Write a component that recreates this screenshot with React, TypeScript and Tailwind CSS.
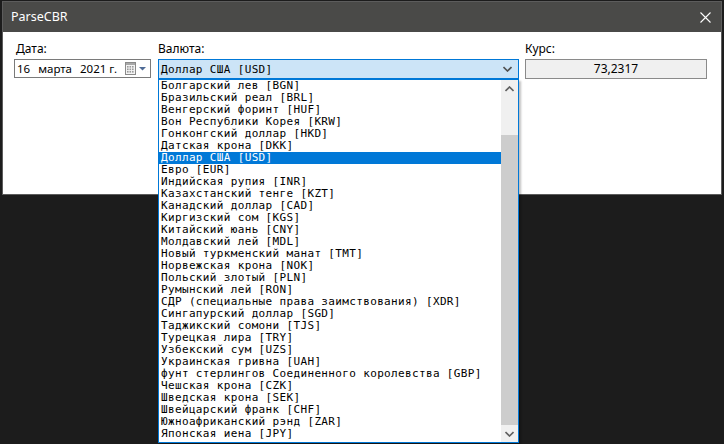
import React from 'react';

const CURRENCIES = [
  'Болгарский лев [BGN]',
  'Бразильский реал [BRL]',
  'Венгерский форинт [HUF]',
  'Вон Республики Корея [KRW]',
  'Гонконгский доллар [HKD]',
  'Датская крона [DKK]',
  'Доллар США [USD]',
  'Евро [EUR]',
  'Индийская рупия [INR]',
  'Казахстанский тенге [KZT]',
  'Канадский доллар [CAD]',
  'Киргизский сом [KGS]',
  'Китайский юань [CNY]',
  'Молдавский лей [MDL]',
  'Новый туркменский манат [TMT]',
  'Норвежская крона [NOK]',
  'Польский злотый [PLN]',
  'Румынский лей [RON]',
  'СДР (специальные права заимствования) [XDR]',
  'Сингапурский доллар [SGD]',
  'Таджикский сомони [TJS]',
  'Турецкая лира [TRY]',
  'Узбекский сум [UZS]',
  'Украинская гривна [UAH]',
  'фунт стерлингов Соединенного королевства [GBP]',
  'Чешская крона [CZK]',
  'Шведская крона [SEK]',
  'Швейцарский франк [CHF]',
  'Южноафриканский рэнд [ZAR]',
  'Японская иена [JPY]',
];

const SELECTED = 'Доллар США [USD]';
const MONO = '"DejaVu Sans Mono", "Liberation Mono", monospace';

function Chevron({ up = false, className = '' }: { up?: boolean; className?: string }) {
  return (
    <svg width="9" height="6" viewBox="0 0 9 6" className={className}>
      <path
        d={up ? 'M0.5 5 L4.5 1 L8.5 5' : 'M0.5 1 L4.5 5 L8.5 1'}
        fill="none"
        stroke="currentColor"
        strokeWidth="1.6"
      />
    </svg>
  );
}

function CalendarIcon() {
  return (
    <svg width="22" height="13" viewBox="0 0 22 13">
      <rect x="0.5" y="0.5" width="10" height="12" fill="#f4f4f4" stroke="#8a8a8a" />
      <rect x="1" y="1" width="9" height="2" fill="#a8a8a8" />
      {[4, 6.5, 9].map((y) =>
        [2, 4.5, 7].map((x) => (
          <rect key={`${x}-${y}`} x={x} y={y} width="1.6" height="1.6" fill="#9a9a9a" />
        ))
      )}
      <path d="M14 5 L21 5 L17.5 8.5 Z" fill="#4f6b96" />
    </svg>
  );
}

export default function App() {
  return (
    <div
      className="w-[724px] h-[444px] bg-[#1c1c1c] pt-[1px] pl-[2px] overflow-hidden"
      style={{ fontFamily: '"Noto Sans", "Open Sans", sans-serif' }}
    >
      <div className="w-[720px] border border-[#5c5c5c]">
        <div className="h-[30px] bg-[#4a4a48] flex items-center justify-between pl-[8px] pr-[10px]">
          <span className="text-[12.5px] text-white">ParseCBR</span>
          <svg width="11" height="11" viewBox="0 0 11 11">
            <path d="M0.5 0.5 L10.5 10.5 M10.5 0.5 L0.5 10.5" stroke="#ffffff" strokeWidth="1.1" />
          </svg>
        </div>

        <div className="h-[162px] bg-white flex pl-[11px] pt-[8px] text-[12px] text-black">
          <div className="w-[137px] flex flex-col">
            <span className="pl-[2px] h-[18px] leading-[18px]">Дата:</span>
            <div className="mt-[1px] h-[19px] border border-[#7a7a7a] flex items-center pl-[2px] pr-[3px] justify-between">
              <div className="flex items-center leading-none text-[11.5px]">
                <span>16</span>
                <span className="ml-[8px]">марта</span>
                <span className="ml-[8px]">2021 г.</span>
              </div>
              <CalendarIcon />
            </div>
          </div>

          <div className="ml-[7px] w-[361px] flex flex-col relative">
            <span className="h-[18px] leading-[18px]">Валюта:</span>
            <div className="mt-[1px] h-[20px] border border-[#0078d7] bg-[#cce4f7] flex items-center justify-between pl-[2px] pr-[6px]">
              <span
                className="text-[11px] tracking-[0.35px] leading-none whitespace-pre"
                style={{ fontFamily: MONO }}
              >
                {SELECTED}
              </span>
              <Chevron className="text-[#505050]" />
            </div>

            <div className="absolute left-0 top-[39px] w-[361px] h-[364px] border border-[#0078d7] bg-white flex shadow-[2px_2px_2px_rgba(0,0,0,0.25)] z-10">
              <div className="flex-1 flex flex-col text-[11px] tracking-[0.35px]" style={{ fontFamily: MONO }}>
                {CURRENCIES.map((c) => (
                  <div
                    key={c}
                    className={`h-[12px] leading-[12px] pl-[2px] whitespace-pre ${
                      c === SELECTED ? 'bg-[#0078d7] text-white' : 'text-black'
                    }`}
                  >
                    {c}
                  </div>
                ))}
              </div>
              <div className="w-[17px] bg-[#f0f0f0] flex flex-col">
                <div className="h-[17px] flex items-center justify-center text-[#606060]">
                  <Chevron up />
                </div>
                <div className="h-[38px]" />
                <div className="flex-1 bg-[#cdcdcd]" />
                <div className="h-[17px] flex items-center justify-center text-[#606060]">
                  <Chevron />
                </div>
              </div>
            </div>
          </div>

          <div className="ml-[6px] w-[182px] flex flex-col">
            <span className="h-[18px] leading-[18px]">Курс:</span>
            <div className="mt-[1px] h-[20px] border border-[#8a8a8a] bg-[#f0f0f0] flex items-center justify-center">
              <span className="leading-none">73,2317</span>
            </div>
          </div>
        </div>
      </div>
    </div>
  );
}
